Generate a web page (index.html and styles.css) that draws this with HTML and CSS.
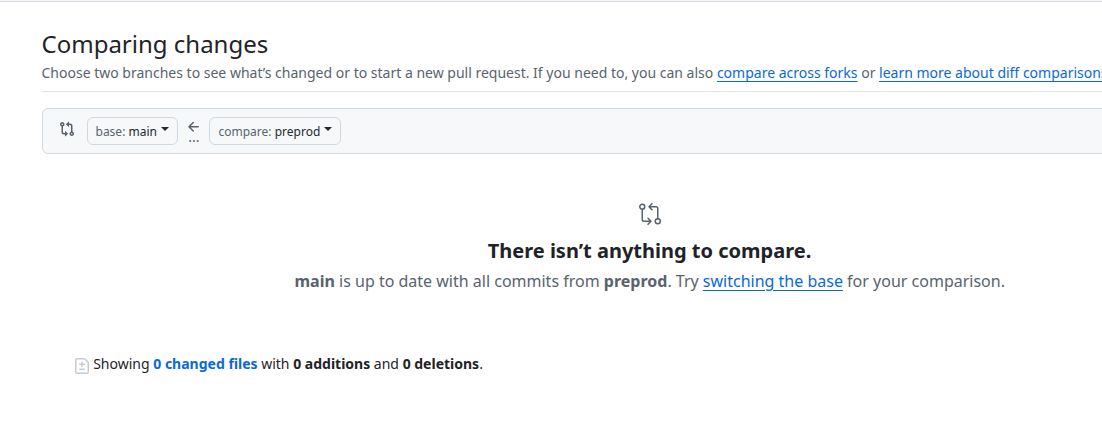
FILE: index.html
```html
<!DOCTYPE html>
<html lang="en">
<head>
<meta charset="utf-8">
<title>Comparing changes</title>
<link rel="stylesheet" href="styles.css">
</head>
<body>
<main class="page">
  <header class="subhead">
    <h1 class="title">Comparing changes</h1>
    <p class="description">Choose two branches to see what’s changed or to start a new pull request. If you need to, you can also <a href="#">compare across forks</a> or <a href="#">learn more about diff comparisons</a>.</p>
  </header>
  <div class="range">
    <svg class="range-icon" width="16" height="16" viewBox="0 0 16 16"><path d="M9.573.677A.25.25 0 0 1 10 .854V2.500h1A2.500 2.500 0 0 1 13.500 5v5.628a2.251 2.251 0 1 1-1.500 0V5a1 1 0 0 0-1-1h-1v1.646a.25.25 0 0 1-.427.177L7.177 3.427a.25.25 0 0 1 0-.354ZM6 12v-1.646a.25.25 0 0 1 .427-.177l2.396 2.396a.25.25 0 0 1 0 .354l-2.396 2.396A.25.25 0 0 1 6 15.146V13.500H5A2.500 2.500 0 0 1 2.500 11V5.372a2.250 2.250 0 1 1 1.500 0V11a1 1 0 0 0 1 1ZM4 3.250a.75.75 0 1 0-1.500 0 .75.75 0 0 0 1.500 0ZM12.750 12a.75.75 0 1 0 0 1.500.75.75 0 0 0 0-1.500Z"/></svg>
    <button class="branch base">base: <span class="name">main</span><i class="caret"></i></button>
    <div class="direction">
      <svg width="16" height="16" viewBox="0 0 16 16"><path d="M7.780 12.530a.75.75 0 0 1-1.060 0L2.470 8.280a.75.75 0 0 1 0-1.060l4.250-4.250a.751.751 0 0 1 1.060 1.060L4.810 7h7.440a.75.75 0 0 1 0 1.500H4.810l2.970 2.970a.75.75 0 0 1 0 1.060Z"/></svg>
      <span class="dots">...</span>
    </div>
    <button class="branch compare">compare: <span class="name">preprod</span><i class="caret"></i></button>
  </div>
  <section class="blank">
    <svg class="blank-icon" width="24" height="24" viewBox="0 0 24 24"><g fill="none" stroke="currentColor" stroke-width="1.500" stroke-linecap="round" stroke-linejoin="round"><circle cx="4.250" cy="4.750" r="2.500"/><circle cx="19.750" cy="19.250" r="2.500"/><path d="M4.250 7.250V17.500a1.750 1.750 0 0 0 1.750 1.750H12.750M10 16.250l3 3-3 3M19.750 16.750V6.500a1.750 1.750 0 0 0-1.750-1.750H11.250M14 1.750l-3 3 3 3"/></g></svg>
    <h2 class="blank-title">There isn’t anything to compare.</h2>
    <p class="blank-text"><strong>main</strong> is up to date with all commits from <strong>preprod</strong>. Try <a href="#">switching the base</a> for your comparison.</p>
  </section>
  <div class="toc">
    <svg class="toc-icon" width="16" height="16" viewBox="0 0 16 16"><path d="M1 1.750C1 .784 1.784 0 2.750 0h7.586c.464 0 .909.184 1.237.513l2.914 2.914c.329.328.513.773.513 1.237v9.586A1.750 1.750 0 0 1 13.250 16H2.750A1.750 1.750 0 0 1 1 14.250Zm1.750-.25a.25.25 0 0 0-.25.25v12.500c0 .138.112.25.25.25h10.500a.25.25 0 0 0 .25-.25V4.664a.25.25 0 0 0-.073-.177l-2.914-2.914a.25.25 0 0 0-.177-.073ZM8 3.250a.75.75 0 0 1 .75.75v1.500h1.500a.75.75 0 0 1 0 1.500h-1.500v1.500a.75.75 0 0 1-1.500 0V7h-1.500a.75.75 0 0 1 0-1.500h1.500V4A.75.75 0 0 1 8 3.250Zm-3 8a.75.75 0 0 1 .75-.75h4.500a.75.75 0 0 1 0 1.500h-4.500a.75.75 0 0 1-.75-.75Z"/></svg>
    <span>Showing <a class="files" href="#">0 changed files</a> with <strong>0 additions</strong> and <strong>0 deletions</strong>.</span>
  </div>
</main>
</body>
</html>
```
FILE: styles.css
```css
* { box-sizing: border-box; }
html { overflow: hidden; }
body { margin: 0; padding-top: 1px; background: linear-gradient(#f6f8fa 1px, #d1d9e0 1px, #d1d9e0 2px, #fff 2px) no-repeat; color: #1f2328; font: 14px/21px "Noto Sans", sans-serif; overflow: hidden; }
h1, h2, p { margin: 0; }
a { color: #0969da; text-decoration: underline; text-underline-offset: 3px; }
svg { display: block; fill: currentColor; flex: none; }
strong { font-weight: 700; }
.page { width: 1216px; margin-left: 41.500px; padding-top: 25px; }
.subhead { height: 66px; border-bottom: 1px solid #d1d9e0b3; }
.title { font-size: 24px; line-height: 36px; font-weight: 400; }
.description { color: #59636e; white-space: nowrap; }
.range { display: flex; height: 46px; margin-top: 16px; padding: 8px 16px; border: 1px solid #d1d9e0; border-radius: 6px; background: #f6f8fa; }
.range-icon { margin-top: 4px; color: #59636e; }
.branch { display: flex; align-items: center; height: 28px; padding: 1px 8px 0; border: 1px solid #d1d9e0; border-radius: 6px; background: #f6f8fa; color: #59636e; font: 400 12px/20px "Noto Sans", sans-serif; white-space: pre; }
.base { width: 91px; margin-left: 12px; }
.compare { width: 132px; padding-left: 9px; padding-right: 7px; }
.name { color: #25292e; }
.caret { margin: -6px 0 0 4px; border: 4px solid transparent; border-top-color: #25292e; border-bottom: 0; }
.direction { width: 31px; padding-left: 2px; display: flex; flex-direction: column; align-items: center; color: #59636e; }
.direction svg { margin-top: 2px; }
.dots { font-size: 14px; line-height: 10px; margin-top: -3px; }
.blank { display: flex; flex-direction: column; align-items: center; padding-top: 48px; }
.blank-icon { color: #59636e; }
.blank-title { margin-top: 10px; font-size: 20px; line-height: 30px; font-weight: 700; }
.blank-text { margin-top: 3px; padding-left: 0.500px; color: #59636e; font-size: 16px; line-height: 24px; }
.toc { display: flex; margin: 60px 0 0 32px; }
.toc-icon { margin: 5px 3.700px 0 0; color: #c5ccd3; }
.files { font-weight: 700; text-decoration: none; }
```
